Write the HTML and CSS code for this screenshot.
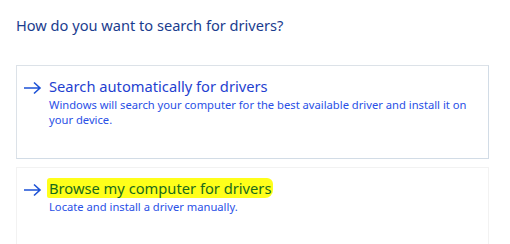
FILE: index.html
```html
<!DOCTYPE html>
<html lang="en">
  <head>
    <meta charset="UTF-8" />
    <title>Update Drivers</title>
    <link rel="stylesheet" href="styles.css">
  </head>
  <body>
    <h1 class="question">How do you want to search for drivers?</h1>

    <!-- Option: automatic search -->
    <div class="option first">
      <div class="option-row">
        <span class="arrow">
          <svg width="19" height="14" viewBox="0 0 19 14">
            <path d="M1 7H17M11 1.5L17 7L11 12.5" fill="none" stroke="#1d52d6" stroke-width="1.6" />
          </svg>
        </span>
        <div class="option-text">
          <div class="option-title">Search automatically for drivers</div>
          <div class="option-desc">Windows will search your computer for the best available driver and install it on your device.</div>
        </div>
      </div>
    </div>

    <!-- Option: manual browse -->
    <div class="option second">
      <div class="option-row">
        <span class="arrow">
          <svg width="19" height="14" viewBox="0 0 19 14">
            <path d="M1 7H17M11 1.5L17 7L11 12.5" fill="none" stroke="#1d52d6" stroke-width="1.6" />
          </svg>
        </span>
        <div class="option-text">
          <div class="option-title"><span class="marker">Browse my computer for drivers</span></div>
          <div class="option-desc">Locate and install a driver manually.</div>
        </div>
      </div>
    </div>
  </body>
</html>
```

FILE: styles.css
```css
body {
  margin: 0;
  background: #fff;
  font-family: "Noto Sans", "Open Sans", sans-serif;
  padding: 0 21px 0 16px;
}

.question {
  margin: 0;
  padding-top: 15px;
  font-size: 14.6px;
  font-weight: normal;
  color: #1a3c8e;
  height: 50px;
}

.option {
  border: 1px solid #dce2e8;
  border-right-color: #d2dce6;
  border-bottom-color: #d2dce6;
}

.option.first {
  height: 92px;
}

.option.second {
  margin-top: 8px;
  height: 80px;
  border-color: #f2f2f2;
}

.option-row {
  display: flex;
  padding: 10px 0 0 6px;
}

.arrow {
  flex-shrink: 0;
  width: 26px;
  padding-top: 2px;
}

.option-text {
  max-width: 424px;
}

.option-title {
  font-size: 14.7px;
  color: #1f3fd0;
  line-height: 21px;
}

.option-desc {
  font-size: 11.2px;
  color: #2950e6;
  line-height: 15px;
}

.marker {
  background: #ffff1a;
  color: #1a6a1a;
  border-radius: 3px 6px 8px 2px;
  padding: 0 2px;
  margin: 0 -2px;
}
```
